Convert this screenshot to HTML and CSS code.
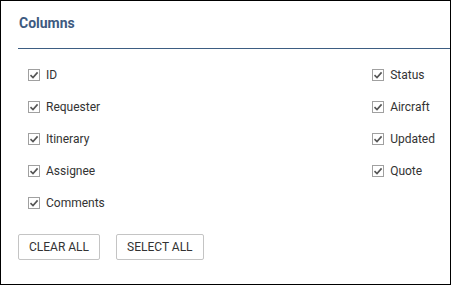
FILE: index.html
```html
<!DOCTYPE html>
<html>
<head>
<meta charset="utf-8">
<link rel="stylesheet" href="styles.css">
</head>
<body>
<div class="panel">
  <div class="header"><span class="title">Columns</span></div>
  <div class="cols">
    <ul class="list">
      <li><svg class="cb" viewBox="0 0 12 12"><rect x="0.5" y="0.5" width="11" height="11" fill="#fff" stroke="#a0a0a0"/><path d="M2.5 6.2 L5 8.6 L9.6 3.4" fill="none" stroke="#555" stroke-width="1.6"/></svg>ID</li>
      <li><svg class="cb" viewBox="0 0 12 12"><rect x="0.5" y="0.5" width="11" height="11" fill="#fff" stroke="#a0a0a0"/><path d="M2.5 6.2 L5 8.6 L9.6 3.4" fill="none" stroke="#555" stroke-width="1.6"/></svg>Requester</li>
      <li><svg class="cb" viewBox="0 0 12 12"><rect x="0.5" y="0.5" width="11" height="11" fill="#fff" stroke="#a0a0a0"/><path d="M2.5 6.2 L5 8.6 L9.6 3.4" fill="none" stroke="#555" stroke-width="1.6"/></svg>Itinerary</li>
      <li><svg class="cb" viewBox="0 0 12 12"><rect x="0.5" y="0.5" width="11" height="11" fill="#fff" stroke="#a0a0a0"/><path d="M2.5 6.2 L5 8.6 L9.6 3.4" fill="none" stroke="#555" stroke-width="1.6"/></svg>Assignee</li>
      <li><svg class="cb" viewBox="0 0 12 12"><rect x="0.5" y="0.5" width="11" height="11" fill="#fff" stroke="#a0a0a0"/><path d="M2.5 6.2 L5 8.6 L9.6 3.4" fill="none" stroke="#555" stroke-width="1.6"/></svg>Comments</li>
    </ul>
    <ul class="list">
      <li><svg class="cb" viewBox="0 0 12 12"><rect x="0.5" y="0.5" width="11" height="11" fill="#fff" stroke="#a0a0a0"/><path d="M2.5 6.2 L5 8.6 L9.6 3.4" fill="none" stroke="#555" stroke-width="1.6"/></svg>Status</li>
      <li><svg class="cb" viewBox="0 0 12 12"><rect x="0.5" y="0.5" width="11" height="11" fill="#fff" stroke="#a0a0a0"/><path d="M2.5 6.2 L5 8.6 L9.6 3.4" fill="none" stroke="#555" stroke-width="1.6"/></svg>Aircraft</li>
      <li><svg class="cb" viewBox="0 0 12 12"><rect x="0.5" y="0.5" width="11" height="11" fill="#fff" stroke="#a0a0a0"/><path d="M2.5 6.2 L5 8.6 L9.6 3.4" fill="none" stroke="#555" stroke-width="1.6"/></svg>Updated</li>
      <li><svg class="cb" viewBox="0 0 12 12"><rect x="0.5" y="0.5" width="11" height="11" fill="#fff" stroke="#a0a0a0"/><path d="M2.5 6.2 L5 8.6 L9.6 3.4" fill="none" stroke="#555" stroke-width="1.6"/></svg>Quote</li>
    </ul>
  </div>
  <div class="actions">
    <button class="btn">CLEAR ALL</button>
    <button class="btn">SELECT ALL</button>
  </div>
</div>
</body>
</html>
```
FILE: styles.css
```css
html, body {
  margin: 0;
  padding: 0;
  background: #fff;
}
.panel {
  box-sizing: border-box;
  width: 451px;
  height: 285px;
  border: 1px solid #000;
  font-family: Roboto, "Liberation Sans", sans-serif;
  color: #333;
}
.header {
  margin-left: 17px;
  padding: 12px 0 15px 1px;
  border-bottom: 1px solid #3d5d82;
  line-height: 20px;
}
.title {
  font-size: 14px;
  font-weight: 700;
  color: #3d5a80;
}
.cols {
  display: flex;
  justify-content: space-between;
  padding: 16px 15px 0 27px;
}
.list {
  list-style: none;
  margin: 0;
  padding: 0;
  display: flex;
  flex-direction: column;
  gap: 12px;
}
.list li {
  display: flex;
  align-items: center;
  height: 20px;
  font-size: 12px;
  color: #333;
}
.cb {
  width: 12px;
  height: 12px;
  margin-right: 6px;
  flex: none;
}
.actions {
  display: flex;
  gap: 16px;
  padding: 21px 0 0 17px;
}
.btn {
  box-sizing: border-box;
  height: 26px;
  padding: 0 10px;
  border: 1px solid #c4c4c4;
  border-radius: 2px;
  background: #fff;
  font-family: Roboto, "Liberation Sans", sans-serif;
  font-size: 12px;
  color: #333;
  cursor: pointer;
}
```
